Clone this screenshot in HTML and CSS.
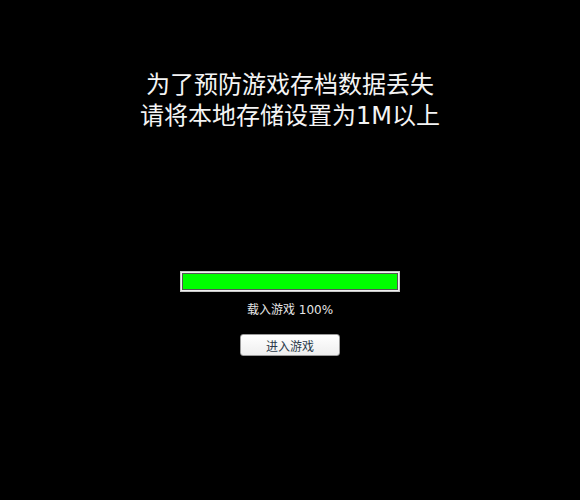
FILE: index.html
```html
<!DOCTYPE html>
<html>
<head>
<meta charset="utf-8">
<link rel="stylesheet" href="styles.css">
</head>
<body>
<div class="page">
  <div class="title">
    <div>为了预防游戏存档数据丢失</div>
    <div>请将本地存储设置为1M以上</div>
  </div>
  <div class="bar"><div class="fill"></div></div>
  <div class="label">载入游戏 100%</div>
  <button class="btn">进入游戏</button>
</div>
</body>
</html>
```
FILE: styles.css
```css
html, body {
  margin: 0;
  padding: 0;
  background: #000;
}
.page {
  width: 580px;
  height: 500px;
  display: flex;
  flex-direction: column;
  align-items: center;
  font-family: "DejaVu Sans", "Noto Sans CJK SC", sans-serif;
  color: #fff;
}
.title {
  margin-top: 70px;
  font-size: 24px;
  line-height: 31px;
  text-align: center;
  color: #f4f4f4;
}
.bar {
  margin-top: 139px;
  width: 216px;
  height: 17px;
  border: 1px solid #c8c8c8;
  padding: 1px;
  background: #f0f0f0;
}
.fill {
  width: 100%;
  height: 100%;
  box-sizing: border-box;
  border: 1px solid #555;
  background: #00ff00;
}
.label {
  margin-top: 10px;
  font-size: 12px;
  line-height: 16px;
  color: #e6e6e6;
}
.btn {
  margin-top: 16px;
  width: 100px;
  height: 22px;
  padding: 0;
  border: 1px solid #9a9a9a;
  border-radius: 3px;
  background: linear-gradient(#ffffff, #eeeeee);
  font-family: "DejaVu Sans", "Noto Sans CJK SC", sans-serif;
  font-size: 12px;
  color: #2a3a4a;
}
```
